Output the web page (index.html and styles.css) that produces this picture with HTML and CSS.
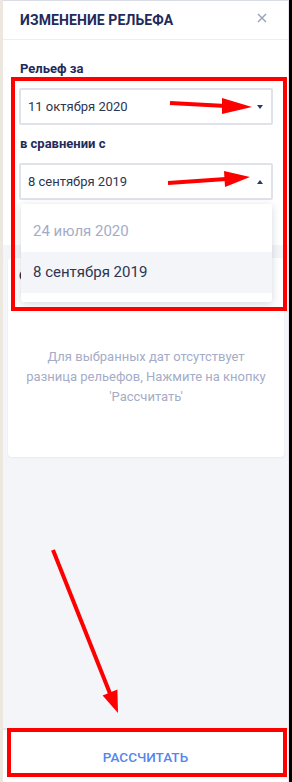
FILE: index.html
```html
<!DOCTYPE html>
<html lang="ru">
  <head>
    <meta charset="UTF-8" />
    <link rel="stylesheet" href="styles.css">
  </head>
  <body>
    <div class="screen">
      <div class="side-strip"></div>
      <div class="panel">
        <div class="panel-header">
          <h1>Изменение рельефа</h1>
          <span class="close">
            <svg width="10" height="10" viewBox="0 0 10 10"><path d="M1 1 L9 9 M9 1 L1 9" stroke="#97a0bd" stroke-width="1.4" fill="none"/></svg>
          </span>
        </div>

        <div class="form-section">
          <label>Рельеф за</label>
          <div class="select">
            <span>11 октября 2020</span>
            <span class="caret caret-down"></span>
          </div>

          <label>в сравнении с</label>
          <div class="select">
            <span>8 сентября 2019</span>
            <span class="caret caret-up"></span>
            <ul class="menu">
              <li class="disabled">24 июля 2020</li>
              <li class="active">8 сентября 2019</li>
            </ul>
          </div>
        </div>

        <div class="content">
          <div class="card">
            <div class="card-title">С</div>
            <p class="empty">Для выбранных дат отсутствует<br>разница рельефов, Нажмите на кнопку<br>'Рассчитать'</p>
          </div>
        </div>

        <div class="footer">
          <button>Рассчитать</button>
        </div>
      </div>
      <div class="edge"></div>

      <!-- annotations drawn over the screenshot -->
      <svg class="marks" width="292" height="782" viewBox="0 0 292 782">
        <rect x="13" y="79" width="272" height="230" fill="none" stroke="#ff0000" stroke-width="4"/>
        <rect x="9" y="730" width="276" height="45" fill="none" stroke="#ff0000" stroke-width="4"/>
        <line x1="170" y1="103" x2="226" y2="106" stroke="#ff0000" stroke-width="4"/>
        <polygon points="222,98 252,107 222,114" fill="#ff0000"/>
        <line x1="168" y1="183" x2="226" y2="179" stroke="#ff0000" stroke-width="4"/>
        <polygon points="224,171 250,177 225,187" fill="#ff0000"/>
        <line x1="53" y1="550" x2="111" y2="696" stroke="#ff0000" stroke-width="4"/>
        <polygon points="102.6,695.5 118,713 117.4,689.5" fill="#ff0000"/>
      </svg>
    </div>
  </body>
</html>
```

FILE: styles.css
```css
:root {
  --navy: #1f2b5a;
  --text: #2c3552;
  --muted: #a4acc7;
  --line: #dfe2ea;
  --bg: #f4f5f8;
}

* {
  box-sizing: border-box;
}

body {
  margin: 0;
  font-family: Roboto, "Noto Sans", sans-serif;
  background: #ece8e0;
}

.screen {
  position: relative;
  display: flex;
  width: 292px;
  height: 782px;
  overflow: hidden;
}

.side-strip {
  width: 3px;
  background: #ece8e0;
}

.edge {
  width: 3px;
  background: #000;
}

.panel {
  flex: 1;
  display: flex;
  flex-direction: column;
  background: var(--bg);
  border-top: 1px solid #d9dce4;
  border-right: 1px solid #e4e6ec;
}

.panel-header {
  display: flex;
  align-items: center;
  justify-content: space-between;
  height: 39px;
  padding: 0 17px;
  background: #fff;
  border-bottom: 1px solid #eceef3;
}

h1 {
  margin: 0;
  font-size: 14px;
  font-weight: 700;
  text-transform: uppercase;
  color: var(--navy);
  letter-spacing: 0.1px;
}

.close {
  display: flex;
  margin: 0 4px 4px 0;
}

.form-section {
  display: flex;
  flex-direction: column;
  padding: 21px 15px 0 16px;
  height: 205px;
  background: #fff;
}

label {
  font-size: 13px;
  line-height: 16px;
  font-weight: 700;
  color: var(--navy);
  margin-bottom: 11px;
  padding-left: 1px;
}

.select {
  position: relative;
  display: flex;
  align-items: center;
  justify-content: space-between;
  height: 37px;
  padding: 0 8px 0 7px;
  margin-bottom: 11px;
  border: 2px solid var(--line);
  border-radius: 2px;
  font-size: 13px;
  color: var(--text);
}

.caret {
  width: 0;
  height: 0;
  border-left: 3.5px solid transparent;
  border-right: 3.5px solid transparent;
}

.caret-down {
  border-top: 4px solid #2b3a6b;
}

.caret-up {
  border-bottom: 4px solid #2b3a6b;
}

.menu {
  position: absolute;
  top: calc(100% + 6px);
  left: 0;
  right: -1px;
  margin: 0;
  padding: 7px 0 9px;
  list-style: none;
  background: #fff;
  border-radius: 3px;
  box-shadow: 0 2px 8px rgba(30, 40, 70, 0.18);
  z-index: 5;
}

.menu li {
  height: 41px;
  line-height: 41px;
  padding-left: 12px;
  font-size: 15px;
  color: var(--text);
}

.menu li.disabled {
  color: var(--muted);
}

.menu li.active {
  background: #f4f5f8;
}

.content {
  flex: 1;
  padding: 13px 4px 0 5px;
}

.card {
  display: flex;
  flex-direction: column;
  height: 199px;
  padding: 10px 11px;
  background: #fff;
  border-radius: 4px;
  box-shadow: 0 1px 2px rgba(30, 40, 70, 0.05);
}

.card-title {
  font-size: 13px;
  line-height: 16px;
  font-weight: 700;
  color: var(--navy);
}

.empty {
  margin: 63px 0 0;
  text-align: center;
  font-size: 13px;
  line-height: 20px;
  color: var(--muted);
}

.footer {
  height: 54px;
  display: flex;
  align-items: center;
  justify-content: center;
  padding-top: 2px;
  background: #fff;
  border-top: 2px solid #e6e9f0;
}

button {
  border: none;
  background: none;
  padding: 0;
  font-family: inherit;
  font-size: 13.5px;
  font-weight: 500;
  text-transform: uppercase;
  color: #5585ee;
  cursor: pointer;
}

.marks {
  position: absolute;
  top: 0;
  left: 0;
  pointer-events: none;
  z-index: 10;
}
```
